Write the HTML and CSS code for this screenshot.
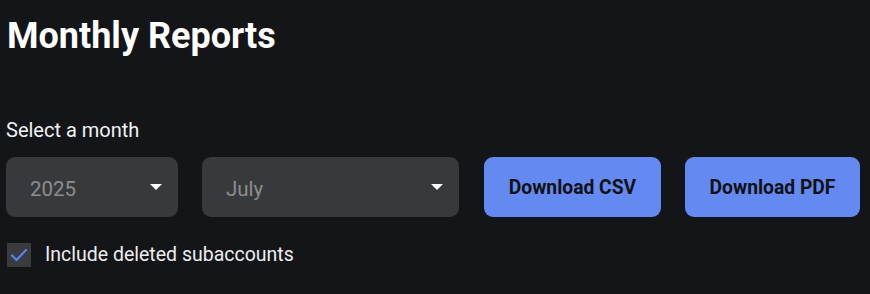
FILE: index.html
```html
<!DOCTYPE html>
<html>
<head>
<meta charset="utf-8">
<link rel="stylesheet" href="styles.css">
</head>
<body>
<main class="page">
  <h1 class="title">Monthly Reports</h1>
  <div class="field-label">Select a month</div>
  <div class="controls">
    <div class="select select-year">
      <span class="select-value">2025</span>
      <svg class="arrow" width="12" height="6" viewBox="0 0 12 6"><path d="M0 0h12L6 6z" fill="#fff"/></svg>
    </div>
    <div class="select select-month">
      <span class="select-value">July</span>
      <svg class="arrow" width="12" height="6" viewBox="0 0 12 6"><path d="M0 0h12L6 6z" fill="#fff"/></svg>
    </div>
    <button class="btn btn-csv">Download CSV</button>
    <button class="btn btn-pdf">Download PDF</button>
  </div>
  <label class="check-row">
    <span class="checkbox">
      <svg width="18" height="14" viewBox="0 0 18 14"><path d="M2 7.5l4.5 4.5L16 2" fill="none" stroke="#5b80ec" stroke-width="2.2" stroke-linecap="round" stroke-linejoin="round"/></svg>
    </span>
    <span class="check-label">Include deleted subaccounts</span>
  </label>
</main>
</body>
</html>
```
FILE: styles.css
```css
* { box-sizing: border-box; }
html, body {
  margin: 0;
  padding: 0;
  background: #141519;
  font-family: Roboto, "Liberation Sans", sans-serif;
  color: #ffffff;
}
.page {
  padding: 13px 10px 0 6px;
  display: flex;
  flex-direction: column;
}
.title {
  margin: 0 0 0 1px;
  font-size: 36px;
  font-weight: 700;
  line-height: 46px;
}
.field-label {
  margin-top: 59px;
  font-size: 20px;
  line-height: 24px;
  color: #f2f2f2;
}
.controls {
  margin-top: 15px;
  display: flex;
  gap: 24px;
  align-items: center;
}
.select {
  height: 60px;
  background: #38393c;
  border-radius: 9px;
  display: flex;
  align-items: center;
  justify-content: space-between;
  padding: 0 16px 0 24px;
}
.select-year { width: 172px; }
.select-month { width: 257px; }
.select-value {
  font-size: 20.5px;
  line-height: 24px;
  padding-top: 3px;
  color: #8c8d90;
}
.btn {
  height: 60px;
  border: none;
  border-radius: 9px;
  background: #6489f0;
  color: #111216;
  font-family: Roboto, "Liberation Sans", sans-serif;
  font-weight: 700;
  font-size: 19.3px;
  padding: 0;
}
.btn-csv { width: 177px; margin-left: 1px; }
.btn-pdf { width: 175px; }
.check-row {
  margin-top: 26px;
  display: flex;
  align-items: center;
  gap: 14px;
}
.checkbox {
  width: 24px;
  height: 24px;
  margin-left: 1px;
  background: #3a3b3f;
  display: flex;
  align-items: center;
  justify-content: center;
}
.check-label {
  font-size: 19.5px;
  line-height: 24px;
  color: #eeeeee;
}
```
